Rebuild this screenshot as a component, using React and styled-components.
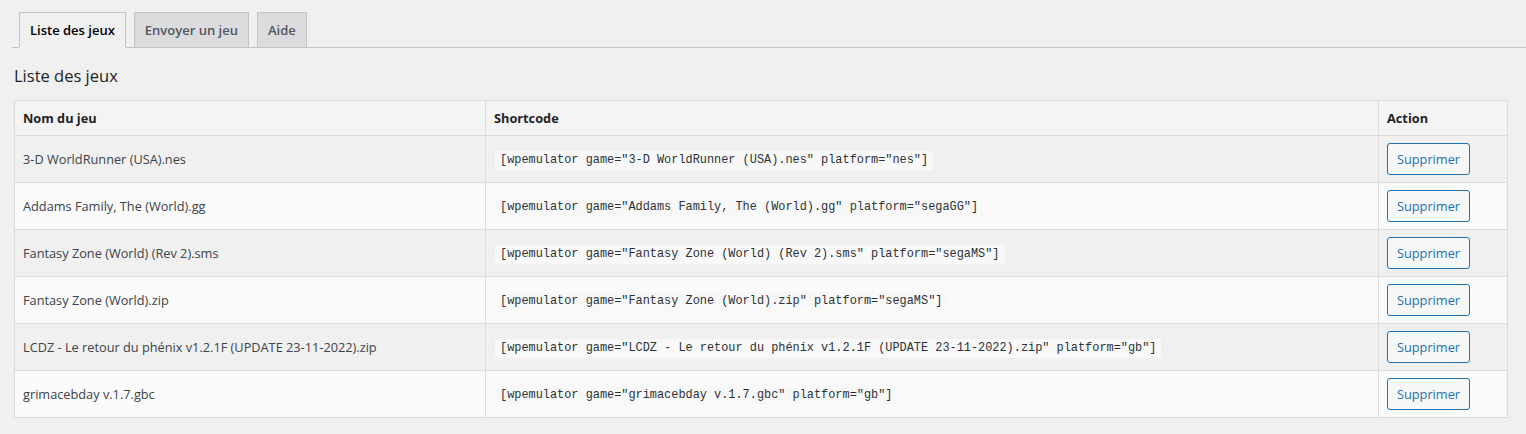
import React from "react";
import styled, { createGlobalStyle } from "styled-components";

const GlobalStyle = createGlobalStyle`
  html, body {
    margin: 0;
    padding: 0;
    background: #f0f0f1;
  }
  body {
    font-family: "Open Sans", "Noto Sans", sans-serif;
    font-size: 12.75px;
    color: #3c434a;
  }
`;

const Wrap = styled.div`
  padding: 12px 19px 16px 14px;
`;

const TabBar = styled.nav`
  display: flex;
  align-items: flex-end;
  gap: 8px;
  margin: 0 -19px 0 -2px;
  padding-left: 7px;
  border-bottom: 1px solid #c3c4c7;
`;

const Tab = styled.a`
  display: block;
  padding: 5px 10px;
  margin-bottom: -1px;
  font-size: 13px;
  font-weight: 600;
  line-height: 24px;
  text-decoration: none;
  border: 1px solid #c3c4c7;
  background: ${({ $active }) => ($active ? "#f0f0f1" : "#dcdcde")};
  color: ${({ $active }) => ($active ? "#000" : "#50575e")};
  border-bottom-color: ${({ $active }) => ($active ? "#f0f0f1" : "#c3c4c7")};
`;

const Heading = styled.h2`
  margin: 16px 0 13px;
  font-size: 16.5px;
  font-weight: 400;
  line-height: 23px;
  color: #1d2327;
`;

const Table = styled.table`
  width: 100%;
  border-collapse: collapse;
  table-layout: fixed;
  border: 1px solid #dcdcde;
`;

const HeadCell = styled.th`
  text-align: left;
  padding: 7px 8px;
  line-height: 20px;
  font-size: 12.75px;
  font-weight: 700;
  color: #1d2327;
  background: #f4f4f4;
  border: 1px solid #dcdcde;
`;

const Row = styled.tr`
  background: ${({ $odd }) => ($odd ? "#f0f0f0" : "#fafafa")};
`;

const Cell = styled.td`
  padding: 7px 8px;
  line-height: 20px;
  vertical-align: middle;
  border: 1px solid #dcdcde;
  color: #3c434a;
`;

const Code = styled.code`
  display: inline-block;
  padding: 0 5px;
  margin-left: 1px;
  line-height: 19px;
  font-family: "Liberation Mono", "DejaVu Sans Mono", monospace;
  font-size: 11.9px;
  background: #f8f8f8;
  border-radius: 2px;
  color: #2c3338;
`;

const Button = styled.button`
  height: 32px;
  padding: 0 9px;
  font-family: inherit;
  font-size: 12.75px;
  color: #2271b1;
  background: #f6f7f7;
  border: 1px solid #2271b1;
  border-radius: 3px;
  cursor: pointer;
`;

const games = [
  { name: "3-D WorldRunner (USA).nes", platform: "nes" },
  { name: "Addams Family, The (World).gg", platform: "segaGG" },
  { name: "Fantasy Zone (World) (Rev 2).sms", platform: "segaMS" },
  { name: "Fantasy Zone (World).zip", platform: "segaMS" },
  { name: "LCDZ - Le retour du phénix v1.2.1F (UPDATE 23-11-2022).zip", platform: "gb" },
  { name: "grimacebday v.1.7.gbc", platform: "gb" },
];

export default function App() {
  return (
    <>
      <GlobalStyle />
      <Wrap>
        <TabBar>
          <Tab $active href="#">Liste des jeux</Tab>
          <Tab href="#">Envoyer un jeu</Tab>
          <Tab href="#">Aide</Tab>
        </TabBar>
        <Heading>Liste des jeux</Heading>
        <Table>
          <colgroup>
            <col style={{ width: 471 }} />
            <col style={{ width: 893 }} />
            <col style={{ width: 129 }} />
          </colgroup>
          <thead>
            <tr>
              <HeadCell>Nom du jeu</HeadCell>
              <HeadCell>Shortcode</HeadCell>
              <HeadCell>Action</HeadCell>
            </tr>
          </thead>
          <tbody>
            {games.map((g, i) => (
              <Row key={g.name} $odd={i % 2 === 0}>
                <Cell>{g.name}</Cell>
                <Cell>
                  <Code>{`[wpemulator game="${g.name}" platform="${g.platform}"]`}</Code>
                </Cell>
                <Cell>
                  <Button>Supprimer</Button>
                </Cell>
              </Row>
            ))}
          </tbody>
        </Table>
      </Wrap>
    </>
  );
}
